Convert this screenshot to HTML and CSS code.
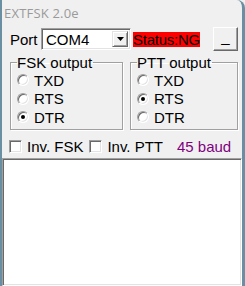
FILE: index.html
```html
<!DOCTYPE html>
<html>
<head>
<meta charset="utf-8">
<link rel="stylesheet" href="styles.css">
</head>
<body>
<div class="window">
  <div class="title">EXTFSK 2.0e</div>
  <div class="toprow">
    <span class="lbl">Port</span>
    <div class="combo">
      <span class="combo-text">COM4</span>
      <span class="combo-btn"><svg width="7" height="4" viewBox="0 0 7 4"><path d="M0 0H7L3.5 4Z" fill="#000"/></svg></span>
    </div>
    <span class="status">Status:NG</span>
    <span class="btn">_</span>
  </div>
  <div class="groups">
    <fieldset class="group">
      <legend>FSK output</legend>
      <div class="radio-row"><span class="radio"></span>TXD</div>
      <div class="radio-row"><span class="radio"></span>RTS</div>
      <div class="radio-row"><span class="radio on"></span>DTR</div>
    </fieldset>
    <fieldset class="group group-ptt">
      <legend>PTT output</legend>
      <div class="radio-row"><span class="radio"></span>TXD</div>
      <div class="radio-row"><span class="radio on"></span>RTS</div>
      <div class="radio-row"><span class="radio"></span>DTR</div>
    </fieldset>
  </div>
  <div class="opts">
    <span class="check"></span><span class="opt-text">Inv. FSK</span>
    <span class="check check2"></span><span class="opt-text">Inv. PTT</span>
    <span class="baud">45 baud</span>
  </div>
  <div class="log"></div>
</div>
</body>
</html>
```

FILE: styles.css
```css
* { box-sizing: border-box; }
html, body { margin: 0; padding: 0; }
body {
  background: #f0f0f0;
  font-family: "Liberation Sans", Arial, sans-serif;
  font-size: 15px;
  color: #000;
}
.window {
  width: 245px;
  height: 286px;
  display: flex;
  flex-direction: column;
  border-left: 2px solid #6a8fa3;
  border-right: 3px solid #6a8fa3;
  border-top-right-radius: 8px;
  background: #f0f0f0;
  overflow: hidden;
}
.title {
  height: 27px;
  padding: 3px 0 0 2px;
  font-family: "Open Sans", "Noto Sans", sans-serif;
  font-size: 13px;
  letter-spacing: 0.2px;
  line-height: 20px;
  color: #9a9a9a;
}
.toprow {
  height: 24px;
  display: flex;
  align-items: center;
  padding-left: 8px;
}
.lbl { width: 31px; line-height: 17px; }
.combo {
  width: 90px;
  height: 22px;
  display: flex;
  background: #fff;
  border: 1px solid;
  border-color: #a0a0a0 #fff #fff #a0a0a0;
  box-shadow: inset 1px 1px 0 #696969, inset -1px -1px 0 #e3e3e3;
  padding: 2px;
}
.combo-text { flex: 1; padding-left: 2px; line-height: 17px; }
.combo-btn {
  width: 16px;
  height: 16px;
  background: #f0f0f0;
  border: 1px solid;
  border-color: #e3e3e3 #696969 #696969 #e3e3e3;
  box-shadow: inset 1px 1px 0 #fff, inset -1px -1px 0 #a0a0a0;
  display: flex;
  align-items: center;
  justify-content: center;
}
.status {
  margin-left: 2px;
  width: 67px;
  height: 15px;
  line-height: 15px;
  background: #ff0000;
  color: #000;
  letter-spacing: -0.25px;
  white-space: nowrap;
}
.btn {
  margin-left: 13px;
  width: 25px;
  height: 24px;
  border: 1px solid;
  border-color: #fff #696969 #696969 #fff;
  box-shadow: inset -1px -1px 0 #a0a0a0;
  text-align: center;
  line-height: 18px;
}
.groups {
  display: flex;
  padding-left: 8px;
  margin-top: 3px;
  gap: 7px;
}
.group {
  margin: 0;
  width: 113px;
  padding: 0 0 2px 6px;
  border: 1px solid #a0a0a0;
  box-shadow: inset 1px 1px 0 #fff, 1px 1px 0 #fff;
}
.group-ptt { width: 108px; }
.group legend {
  padding: 0 1px 0 0;
  margin-left: 0;
  line-height: 17px;
}
.radio-row {
  height: 18.5px;
  display: flex;
  align-items: center;
  line-height: 17px;
}
.radio {
  width: 12px;
  height: 12px;
  border-radius: 50%;
  border: 1px solid;
  border-color: #a0a0a0 #fff #fff #a0a0a0;
  background: #fff;
  box-shadow: inset 1px 1px 0 #696969, inset -1px -1px 0 #e3e3e3;
  margin-right: 5px;
  position: relative;
}
.radio.on::after {
  content: "";
  position: absolute;
  left: 3px;
  top: 3px;
  width: 4px;
  height: 4px;
  border-radius: 50%;
  background: #000;
}
.opts {
  height: 19px;
  margin-top: 7px;
  display: flex;
  align-items: center;
  padding-left: 7px;
}
.check {
  width: 13px;
  height: 13px;
  background: #fff;
  border: 1px solid;
  border-color: #a0a0a0 #fff #fff #a0a0a0;
  box-shadow: inset 1px 1px 0 #696969, inset -1px -1px 0 #e3e3e3;
  margin-right: 5px;
}
.check2 { margin-left: 6px; }
.opt-text { line-height: 17px; }
.baud { margin-left: 14px; color: #800080; line-height: 17px; }
.log {
  flex: 1;
  margin-top: 2px;
  background: #fff;
  border: 1px solid;
  border-color: #a0a0a0 #fff #fff #a0a0a0;
  box-shadow: inset 1px 1px 0 #696969, inset -1px -1px 0 #e3e3e3;
}
```
